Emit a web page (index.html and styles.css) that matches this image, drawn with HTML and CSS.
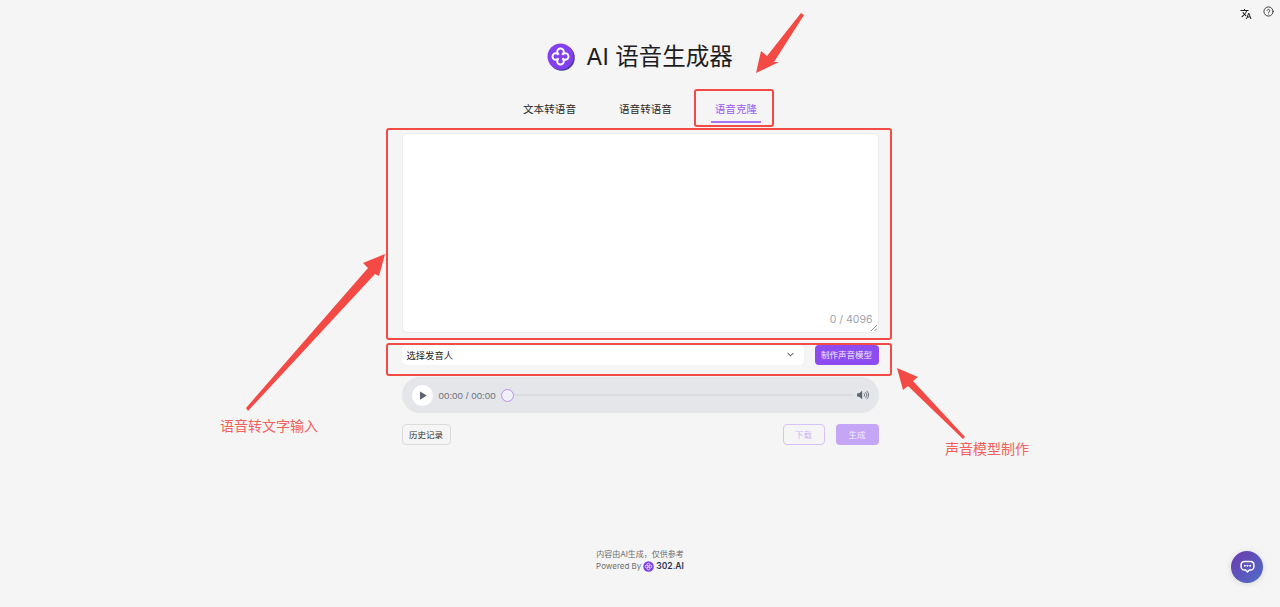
FILE: index.html
```html
<!DOCTYPE html>
<html lang="zh-CN">
<head>
    <meta charset="UTF-8">
    <meta name="viewport" content="width=device-width, initial-scale=1.0">
    <title>AI 语音生成器</title>
    <link rel="stylesheet" href="styles.css">
</head>
<body>
    <div class="topbar">
        <svg class="top-icon translate" viewBox="0 0 24 24"><path d="M12.870 15.070l-2.540-2.510.03-.03c1.740-1.940 2.980-4.170 3.710-6.530H17V4h-7V2H8v2H1v1.990h11.170C11.500 7.920 10.400 9.750 9 11.300 8.090 10.290 7.330 9.180 6.690 8h-2c.73 1.630 1.730 3.170 2.980 4.560l-5.090 5.020L4 19l5-5 3.110 3.110.76-2.040zM18.500 10h-2L12 22h2l1.120-3h4.750L21 22h2l-4.500-12zm-2.620 7l1.620-4.330L19.120 17h-3.240z" fill="#222"/></svg>
        <svg class="top-icon" viewBox="0 0 24 24" fill="none" stroke="#333" stroke-width="2" stroke-linecap="round"><circle cx="12" cy="12" r="10"/><path d="M9 9.300a3 3 0 0 1 5.800 1c0 2-2.800 2.500-2.800 4"/><path d="M12 17.500h.01"/></svg>
    </div>

    <header class="title-row">
        <svg class="logo" viewBox="0 0 28 28">
            <circle cx="14.800" cy="14.800" r="13" fill="#4b3a9e"/>
            <circle cx="13.500" cy="13.500" r="13" fill="#8440ee"/>
            <g fill="none" stroke="#fff" stroke-width="1.900">
                <circle cx="13.500" cy="8.800" r="3.300"/>
                <circle cx="13.500" cy="18.200" r="3.300"/>
                <circle cx="8.800" cy="13.500" r="3.300"/>
                <circle cx="18.200" cy="13.500" r="3.300"/>
            </g>
            <circle cx="13.500" cy="13.500" r="2.600" fill="#8440ee"/>
        </svg>
        <h1>AI 语音生成器</h1>
    </header>

    <nav class="tabs">
        <a class="tab">文本转语音</a>
        <a class="tab">语音转语音</a>
        <a class="tab active">语音克隆</a>
    </nav>

    <main class="panel">
        <div class="text-box">
            <span class="counter">0 / 4096</span>
            <svg class="grip" viewBox="0 0 7 7" stroke="#777" stroke-width="1"><path d="M0 7L7 0M4 7L7 4"/></svg>
        </div>

        <div class="voice-row">
            <div class="voice-select">
                <span>选择发音人</span>
                <svg class="chevron" viewBox="0 0 10 6" fill="none" stroke="#222" stroke-width="1.400"><path d="M1 1l4 4 4-4"/></svg>
            </div>
            <button class="btn-primary">制作声音模型</button>
        </div>

        <div class="player">
            <span class="play"><svg viewBox="0 0 10 12"><path d="M1 0.500l9 5.500-9 5.500z" fill="#5b6270"/></svg></span>
            <span class="time">00:00 / 00:00</span>
            <span class="thumb"></span>
            <span class="track"></span>
            <svg class="volume" viewBox="0 0 14 12" fill="none"><path d="M0 4h2.500L6 1v10L2.500 8H0z" fill="#5b6270"/><path d="M8 4a2.500 2.500 0 0 1 0 4M10 2.500a5 5 0 0 1 0 7M11.500 1a7 7 0 0 1 0 10" stroke="#5b6270" stroke-width="1"/></svg>
        </div>

        <div class="actions">
            <button class="btn-history">历史记录</button>
            <div class="actions-right">
                <button class="btn-download">下载</button>
                <button class="btn-generate">生成</button>
            </div>
        </div>
    </main>

    <footer class="footer">
        <p>内容由AI生成，仅供参考</p>
        <p class="powered">Powered By
            <svg class="mini-logo" viewBox="0 0 28 28"><circle cx="14" cy="14" r="13.500" fill="#7c3fe8"/><g fill="none" stroke="#e4d8ff" stroke-width="2.500"><circle cx="14" cy="9" r="3.500"/><circle cx="14" cy="19" r="3.500"/><circle cx="9" cy="14" r="3.500"/><circle cx="19" cy="14" r="3.500"/></g></svg>
            <b>302.AI</b>
        </p>
    </footer>

    <button class="chat-btn">
        <svg viewBox="0 0 20 18"><path d="M6 1.500h8a4.500 4.500 0 0 1 4.500 4.500v2.500a4.500 4.500 0 0 1-4.500 4.500h-1.500l-2.500 2.500-2.500-2.500H6a4.500 4.500 0 0 1-4.500-4.500V6A4.500 4.500 0 0 1 6 1.500z" fill="none" stroke="#fff" stroke-width="2"/><circle cx="6.500" cy="7.300" r="1.300" fill="#fff"/><circle cx="10" cy="7.300" r="1.300" fill="#fff"/><circle cx="13.500" cy="7.300" r="1.300" fill="#fff"/></svg>
    </button>

    <!-- annotations drawn over the screenshot -->
    <div class="mark mark-tab"></div>
    <div class="mark mark-text"></div>
    <div class="mark mark-voice"></div>
    <svg class="arrows" viewBox="0 0 1280 607">
        <polygon points="756,73 761,51 767,56 801,13 804,15 774,62 779,62"/>
        <polygon points="385,254 363,263 368,268 246,408 248,411 375,274 379,276"/>
        <polygon points="897,368 918,377 913,381 965,437 963,439 908,386 903,390"/>
    </svg>
    <span class="note note-left">语音转文字输入</span>
    <span class="note note-right">声音模型制作</span>
</body>
</html>
```

FILE: styles.css
```css
* {
    margin: 0;
    padding: 0;
    box-sizing: border-box;
    font-family: Inter, "Noto Sans CJK SC", sans-serif;
}

body {
    position: relative;
    height: 607px;
    overflow: hidden;
    background-color: #f5f5f5;
    color: #222;
}

button {
    border: none;
    padding-bottom: 2px;
    font-size: 8.500px;
}

.topbar {
    display: flex;
    justify-content: flex-end;
    align-items: flex-start;
    gap: 11px;
    height: 43px;
    padding: 6px 6px 0 0;
}
.top-icon {
    width: 11px;
    height: 11px;
}
.top-icon.translate {
    width: 12px;
    height: 12px;
    margin-top: 2px;
}

.title-row {
    display: flex;
    justify-content: center;
    align-items: center;
    gap: 11px;
    height: 27px;
}
.logo {
    width: 28px;
    height: 28px;
}
h1 {
    font-size: 23.500px;
    font-weight: 400;
    line-height: 27px;
    color: #1d1d1f;
}

.tabs {
    display: flex;
    justify-content: center;
    gap: 43px;
    height: 36px;
    margin-top: 21px;
    padding-left: 4px;
}
.tab {
    display: block;
    padding-top: 11px;
    font-size: 10.600px;
    line-height: 15px;
    color: #2b2b2b;
}
.tab.active {
    position: relative;
    width: 50px;
    margin-left: -4px;
    text-align: center;
    color: #9a5cf2;
}
.tab.active::after {
    content: "";
    position: absolute;
    left: 0;
    right: 0;
    bottom: 4px;
    height: 2px;
    background-color: #a874f4;
}

.panel {
    width: 477px;
    margin: 6px auto 0;
}

.text-box {
    position: relative;
    height: 200px;
    background-color: #fff;
    border: 1px solid #ececec;
    border-radius: 5px;
}
.counter {
    position: absolute;
    right: 5px;
    bottom: 6px;
    font-size: 10.500px;
    color: #9ca3af;
}
.grip {
    position: absolute;
    right: 1px;
    bottom: 1px;
    width: 6px;
    height: 6px;
}

.voice-row {
    display: flex;
    gap: 11px;
    height: 20px;
    margin-top: 12px;
}
.voice-select {
    flex: 1;
    display: flex;
    justify-content: space-between;
    align-items: center;
    padding: 0 10px 1px 5px;
    background-color: #fff;
    border-radius: 4px;
    box-shadow: 0 0 1px #ddd;
    font-size: 9.300px;
}
.chevron {
    width: 7px;
    height: 5px;
}
.btn-primary {
    width: 64px;
    border-radius: 4px;
    background-color: #8e4cf0;
    color: #f3ebff;
}

.player {
    display: flex;
    align-items: center;
    height: 36px;
    margin-top: 12px;
    padding: 0 10px;
    background-color: #e5e6ea;
    border-radius: 18px;
}
.play {
    display: flex;
    justify-content: center;
    align-items: center;
    width: 21px;
    height: 21px;
    background-color: #fff;
    border-radius: 50%;
}
.play svg {
    width: 8px;
    height: 9px;
    margin-left: 1px;
}
.time {
    margin-left: 6px;
    font-family: "Liberation Sans", sans-serif;
    font-size: 9.800px;
    color: #6b7280;
}
.thumb {
    width: 13px;
    height: 13px;
    margin-left: 5px;
    background-color: #f2f0f7;
    border: 1.500px solid #b690f3;
    border-radius: 50%;
}
.track {
    flex: 1;
    height: 2px;
    background-color: #dcdde1;
}
.volume {
    width: 12px;
    height: 10px;
    margin-left: 4px;
}

.actions {
    display: flex;
    justify-content: space-between;
    margin-top: 11px;
    height: 21px;
}
.actions-right {
    display: flex;
    gap: 11px;
}
.btn-history {
    width: 49px;
    background-color: #f5f5f5;
    border: 1px solid #dcdcdc;
    border-radius: 4px;
    color: #333;
}
.btn-download {
    width: 42px;
    background-color: #f5f5f5;
    border: 1px solid #d6c2f8;
    border-radius: 4px;
    color: #cbb4f5;
}
.btn-generate {
    width: 43px;
    background-color: #c5a6f6;
    border-radius: 4px;
    color: #f3ebff;
}

.footer {
    margin-top: 103px;
    text-align: center;
    font-size: 8px;
    line-height: 12px;
    color: #6e6e6e;
}
.powered {
    display: flex;
    justify-content: center;
    align-items: center;
    gap: 2px;
}
.mini-logo {
    width: 11px;
    height: 11px;
}
.powered b {
    font-size: 8.500px;
    font-weight: 600;
    color: #2b3350;
}

.chat-btn {
    position: absolute;
    left: 1231px;
    top: 551px;
    display: flex;
    justify-content: center;
    align-items: center;
    width: 32px;
    height: 32px;
    padding: 0;
    border-radius: 50%;
    background: linear-gradient(135deg, #6c3aae, #4f6ec9);
    box-shadow: 0 1px 6px rgba(0, 0, 0, 0.12);
}
.chat-btn svg {
    width: 15px;
    height: 14px;
}

.mark {
    position: absolute;
    border: 2.500px solid #f44a45;
    border-radius: 3px;
}
.mark-tab {
    left: 694px;
    top: 89px;
    width: 80px;
    height: 38px;
}
.mark-text {
    left: 386px;
    top: 128px;
    width: 506px;
    height: 212px;
}
.mark-voice {
    left: 386px;
    top: 343px;
    width: 506px;
    height: 33px;
}
.arrows {
    position: absolute;
    left: 0;
    top: 0;
    width: 1280px;
    height: 607px;
    fill: #f44a45;
    pointer-events: none;
}
.note {
    position: absolute;
    font-size: 14px;
    line-height: 20px;
    color: #f4605b;
}
.note-left {
    left: 220px;
    top: 416px;
}
.note-right {
    left: 945px;
    top: 439px;
}
```
